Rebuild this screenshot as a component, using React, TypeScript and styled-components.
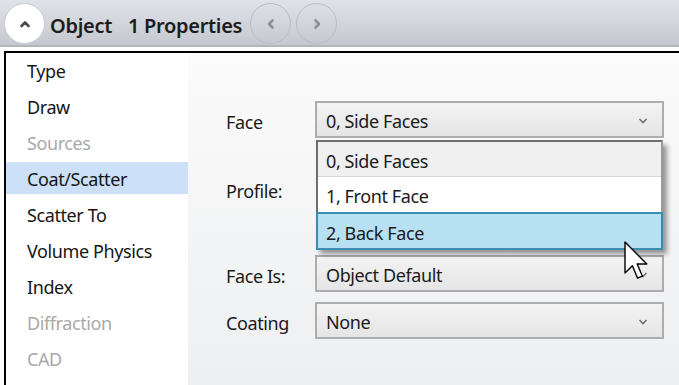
import React from 'react';
import styled, { createGlobalStyle } from 'styled-components';

const GlobalStyle = createGlobalStyle`
  html, body {
    margin: 0;
    padding: 0;
    background: #ffffff;
    font-family: 'Noto Sans', 'Open Sans', sans-serif;
    color: #1a1a1a;
  }
`;

const sections = [
  { name: 'Type', enabled: true },
  { name: 'Draw', enabled: true },
  { name: 'Sources', enabled: false },
  { name: 'Coat/Scatter', enabled: true },
  { name: 'Scatter To', enabled: true },
  { name: 'Volume Physics', enabled: true },
  { name: 'Index', enabled: true },
  { name: 'Diffraction', enabled: false },
  { name: 'CAD', enabled: false },
];

const faceOptions = ['0, Side Faces', '1, Front Face', '2, Back Face'];

function Chevron({ dir, color }: { dir: 'up' | 'left' | 'right' | 'down'; color: string }) {
  const d = {
    up: 'M2.5 8 L6 4.5 L9.5 8',
    down: 'M2.5 4.5 L6 8 L9.5 4.5',
    left: 'M7.5 2.5 L4 6 L7.5 9.5',
    right: 'M4.5 2.5 L8 6 L4.5 9.5',
  }[dir];
  return (
    <svg width="12" height="12" viewBox="0 0 12 12">
      <path d={d} fill="none" stroke={color} strokeWidth="2.6" strokeLinecap="round" strokeLinejoin="round" />
    </svg>
  );
}

function SmallCaret() {
  return (
    <svg width="10" height="8" viewBox="0 0 10 8">
      <path d="M1.5 2 L5 5.5 L8.5 2" fill="none" stroke="#707070" strokeWidth="1.6" />
    </svg>
  );
}

function Select({ value }: { value: string }) {
  return (
    <SelectBox>
      <span>{value}</span>
      <SmallCaret />
    </SelectBox>
  );
}

export default function App() {
  return (
    <Page>
      <GlobalStyle />
      <Header>
        <CollapseButton>
          <Chevron dir="up" color="#4a4a4a" />
        </CollapseButton>
        <Title>Object</Title>
        <Title>1 Properties</Title>
        <NavGroup>
          <NavButton>
            <Chevron dir="left" color="#8f8f8f" />
          </NavButton>
          <NavButton>
            <Chevron dir="right" color="#8f8f8f" />
          </NavButton>
        </NavGroup>
      </Header>
      <Body>
        <Sidebar>
          {sections.map((s) => (
            <SideItem key={s.name} $enabled={s.enabled} $selected={s.name === 'Coat/Scatter'}>
              {s.name}
            </SideItem>
          ))}
        </Sidebar>
        <Panel>
          <Form>
            <Row>
              <Label>Face</Label>
              <SelectWrap>
                <Select value="0, Side Faces" />
                <Popup>
                  {faceOptions.map((opt, i) => (
                    <Option key={opt} $kind={i === 0 ? 'current' : i === 2 ? 'hover' : 'plain'}>
                      {opt}
                    </Option>
                  ))}
                </Popup>
              </SelectWrap>
            </Row>
            <ProfileRow>
              <Label>Profile:</Label>
            </ProfileRow>
            <Row>
              <Label>Face Is:</Label>
              <Select value="Object Default" />
            </Row>
            <Row>
              <Label>Coating</Label>
              <Select value="None" />
            </Row>
          </Form>
          <EdgeLine />
        </Panel>
        <Cursor width="24" height="40" viewBox="0 0 12 20">
          <path
            d="M0.5 0.5 L0.5 16 L4.2 12.4 L6.8 18.6 L9.2 17.6 L6.6 11.5 L11.4 11.5 Z"
            fill="#ffffff"
            stroke="#000000"
            strokeWidth="0.7"
            strokeLinejoin="round"
          />
        </Cursor>
      </Body>
    </Page>
  );
}

const Page = styled.div`
  width: 679px;
  height: 385px;
  overflow: hidden;
  display: flex;
  flex-direction: column;
  background: #ffffff;
`;

const Header = styled.div`
  height: 45px;
  flex: none;
  display: flex;
  align-items: center;
  padding-left: 4px;
  background: linear-gradient(#dfe2e8, #c5c8ce);
  border-bottom: 2px solid #b3b6bb;
`;

const CollapseButton = styled.div`
  width: 39px;
  height: 39px;
  border-radius: 50%;
  background: #ffffff;
  border: 1px solid #c9cbd0;
  display: flex;
  align-items: center;
  justify-content: center;
  margin-right: 5px;
  margin-top: 2px;
`;

const Title = styled.span`
  font-size: 20px;
  font-weight: 600;
  color: #1c1c1c;
  margin-right: 16px;
  margin-top: 5px;
  letter-spacing: -0.3px;
`;

const NavGroup = styled.div`
  display: flex;
  gap: 5px;
  margin-left: -8px;
  margin-top: 2px;
`;

const NavButton = styled.div`
  width: 41px;
  height: 41px;
  box-sizing: border-box;
  border-radius: 50%;
  border: 1.5px solid #b9bcc2;
  display: flex;
  align-items: center;
  justify-content: center;
`;

const Body = styled.div`
  position: relative;
  flex: 1;
  display: flex;
  margin-top: 4px;
  margin-left: 4px;
  border-top: 2px solid #000000;
  border-left: 2px solid #000000;
  min-height: 0;
`;

const Sidebar = styled.div`
  width: 182px;
  flex: none;
  background: #ffffff;
  padding-top: 1px;
  display: flex;
  flex-direction: column;
  gap: 4px;
`;

const SideItem = styled.div<{ $enabled: boolean; $selected: boolean }>`
  height: 32px;
  line-height: 35px;
  padding-left: 21px;
  font-size: 18px;
  letter-spacing: -0.4px;
  color: ${(p) => (p.$enabled ? '#161616' : '#a9a9a9')};
  background: ${(p) => (p.$selected ? '#cce1f8' : 'transparent')};
`;

const Panel = styled.div`
  flex: 1;
  display: flex;
  background: linear-gradient(#fbfbfb, #eeeff1);
`;

const Form = styled.div`
  width: 476px;
  padding: 48px 0 0 38px;
  display: flex;
  flex-direction: column;
  gap: 10px;
`;

const Row = styled.div`
  display: flex;
  align-items: center;
`;

const ProfileRow = styled.div`
  height: 97px;
  display: flex;
  align-items: flex-start;
  padding-top: 22px;
  box-sizing: border-box;
`;

const Label = styled.div`
  width: 89px;
  height: 37px;
  flex: none;
  font-size: 18px;
  letter-spacing: -0.4px;
  line-height: 42px;
  color: #1a1a1a;
`;

const SelectWrap = styled.div`
  position: relative;
`;

const SelectBox = styled.div`
  width: 349px;
  height: 37px;
  box-sizing: border-box;
  border: 2px solid #adadad;
  background: linear-gradient(#f3f3f3, #e5e5e5);
  display: flex;
  align-items: center;
  justify-content: space-between;
  padding: 3px 14px 0 9px;
  font-size: 18px;
  letter-spacing: -0.4px;
  color: #1a1a1a;
`;

const Popup = styled.div`
  position: absolute;
  top: 39px;
  left: 1px;
  width: 347px;
  height: 109px;
  box-sizing: border-box;
  background: #ffffff;
  border: 2px solid #6f6f6f;
  border-right-color: #9a9a9a;
  box-shadow: 4px 5px 5px rgba(0, 0, 0, 0.4);
  display: flex;
  flex-direction: column;
  z-index: 2;
`;

const Option = styled.div<{ $kind: 'current' | 'plain' | 'hover' }>`
  flex: none;
  box-sizing: border-box;
  display: flex;
  align-items: center;
  padding: 3px 0 0 8px;
  font-size: 18px;
  letter-spacing: -0.4px;
  color: #1a1a1a;
  background: ${(p) => (p.$kind === 'current' ? '#f0f0f0' : p.$kind === 'hover' ? '#b7e0f3' : '#ffffff')};
  border: ${(p) => (p.$kind === 'hover' ? '2px solid #3c8db4' : 'none')};
  border-bottom: ${(p) => (p.$kind === 'current' ? '1px solid #d8d8d8' : undefined)};
  margin: ${(p) => (p.$kind === 'hover' ? '0 -2px -2px -2px' : '0')};
  height: ${(p) => (p.$kind === 'hover' ? '38px' : '35px')};
`;

const EdgeLine = styled.div`
  margin-left: auto;
  margin-top: 34px;
  width: 4px;
  border-left: 1px solid #cfd0d2;
  border-top: 1px solid #cfd0d2;
  border-top-left-radius: 4px;
  background: #f7f7f7;
`;

const Cursor = styled.svg`
  position: absolute;
  left: 618px;
  top: 188px;
  z-index: 3;
`;
